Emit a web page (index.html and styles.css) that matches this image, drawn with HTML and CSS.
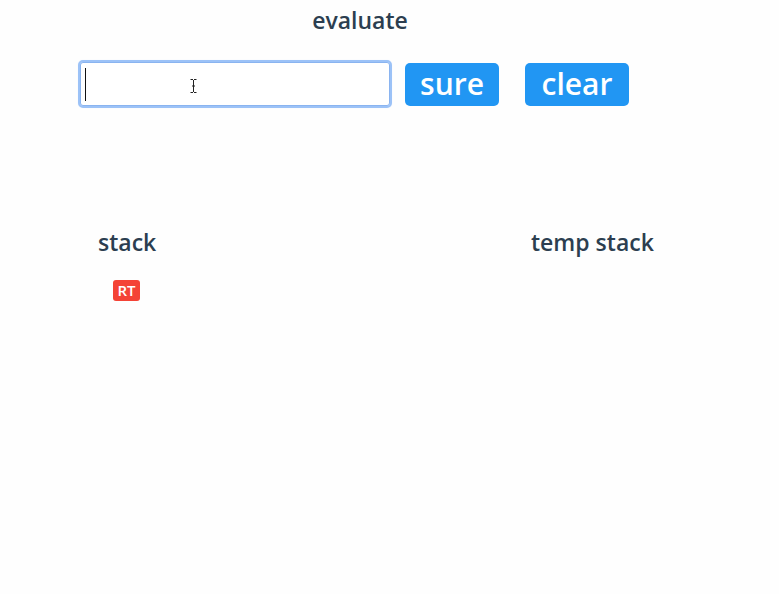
FILE: index.html
```html
<!DOCTYPE html>
<html>
<head>
<meta charset="utf-8">
<link rel="stylesheet" href="styles.css">
</head>
<body>
<div class="app">
  <h1 class="title">evaluate</h1>
  <div class="controls">
    <div class="input-wrap">
      <input class="expr" type="text" autofocus>
      <span class="caret"></span>
      <svg class="ibeam" width="7" height="14" viewBox="0 0 7 14"><path d="M0.5 0.5h2.5M4 0.5h2.5M3.5 1v12M0.5 13.5h2.5M4 13.5h2.5M2 7h3" stroke="#222" stroke-width="1" fill="none"/></svg>
    </div>
    <button class="btn btn-sure">sure</button>
    <button class="btn btn-clear">clear</button>
  </div>
  <div class="stacks">
    <div class="col col-stack">
      <h2 class="col-title">stack</h2>
      <div class="items"><span class="badge">RT</span></div>
    </div>
    <div class="col col-temp">
      <h2 class="col-title">temp stack</h2>
    </div>
  </div>
</div>
</body>
</html>
```
FILE: styles.css
```css
html, body {
  margin: 0;
  padding: 0;
  background: #fefefe;
}
body {
  font-family: "Open Sans", Lato, sans-serif;
  color: #2c3e50;
  width: 779px;
  height: 594px;
  overflow: hidden;
}
.app {
  display: flex;
  flex-direction: column;
}
.title {
  margin: 6px 0 0 0;
  width: 720px;
  text-align: center;
  font-size: 23px;
  font-weight: 600;
  line-height: 28px;
}
.controls {
  display: flex;
  align-items: center;
  margin: 28px 0 0 80px;
}
.input-wrap {
  position: relative;
  display: flex;
}
.expr {
  box-sizing: border-box;
  width: 310px;
  height: 44px;
  margin: 0;
  border: 1px solid #8ab4f0;
  border-radius: 3px;
  outline: 2px solid #9cc2f7;
  outline-offset: 0;
  box-shadow: 0 0 2px 1px #b8d4fa;
  background: #fff;
  padding: 0 6px;
  caret-color: transparent;
}
.caret {
  position: absolute;
  left: 5px;
  top: 6px;
  width: 1px;
  height: 33px;
  background: #111;
}
.ibeam {
  position: absolute;
  left: 110px;
  top: 17px;
}
.btn {
  height: 43px;
  margin: 0;
  border: none;
  border-radius: 5px;
  background: #2196f3;
  color: #fff;
  font-family: "Open Sans", Lato, sans-serif;
  font-size: 30px;
  font-weight: 600;
  line-height: 42px;
  padding: 0 0 1px 0;
}
.btn-sure {
  margin-left: 15px;
  width: 94px;
}
.btn-clear {
  margin-left: 26px;
  width: 104px;
}
.stacks {
  display: flex;
  margin-top: 122px;
}
.col-title {
  margin: 0;
  font-size: 23px;
  font-weight: 600;
  line-height: 28px;
}
.col-stack {
  margin-left: 98px;
  width: 433px;
}
.items {
  display: flex;
  flex-direction: column;
  margin-top: 24px;
  padding-left: 15px;
}
.badge {
  align-self: flex-start;
  box-sizing: border-box;
  width: 27px;
  height: 21px;
  background: #f44336;
  color: #fff;
  border-radius: 3px;
  font-size: 15px;
  font-weight: 600;
  line-height: 21px;
  text-align: center;
}
```
